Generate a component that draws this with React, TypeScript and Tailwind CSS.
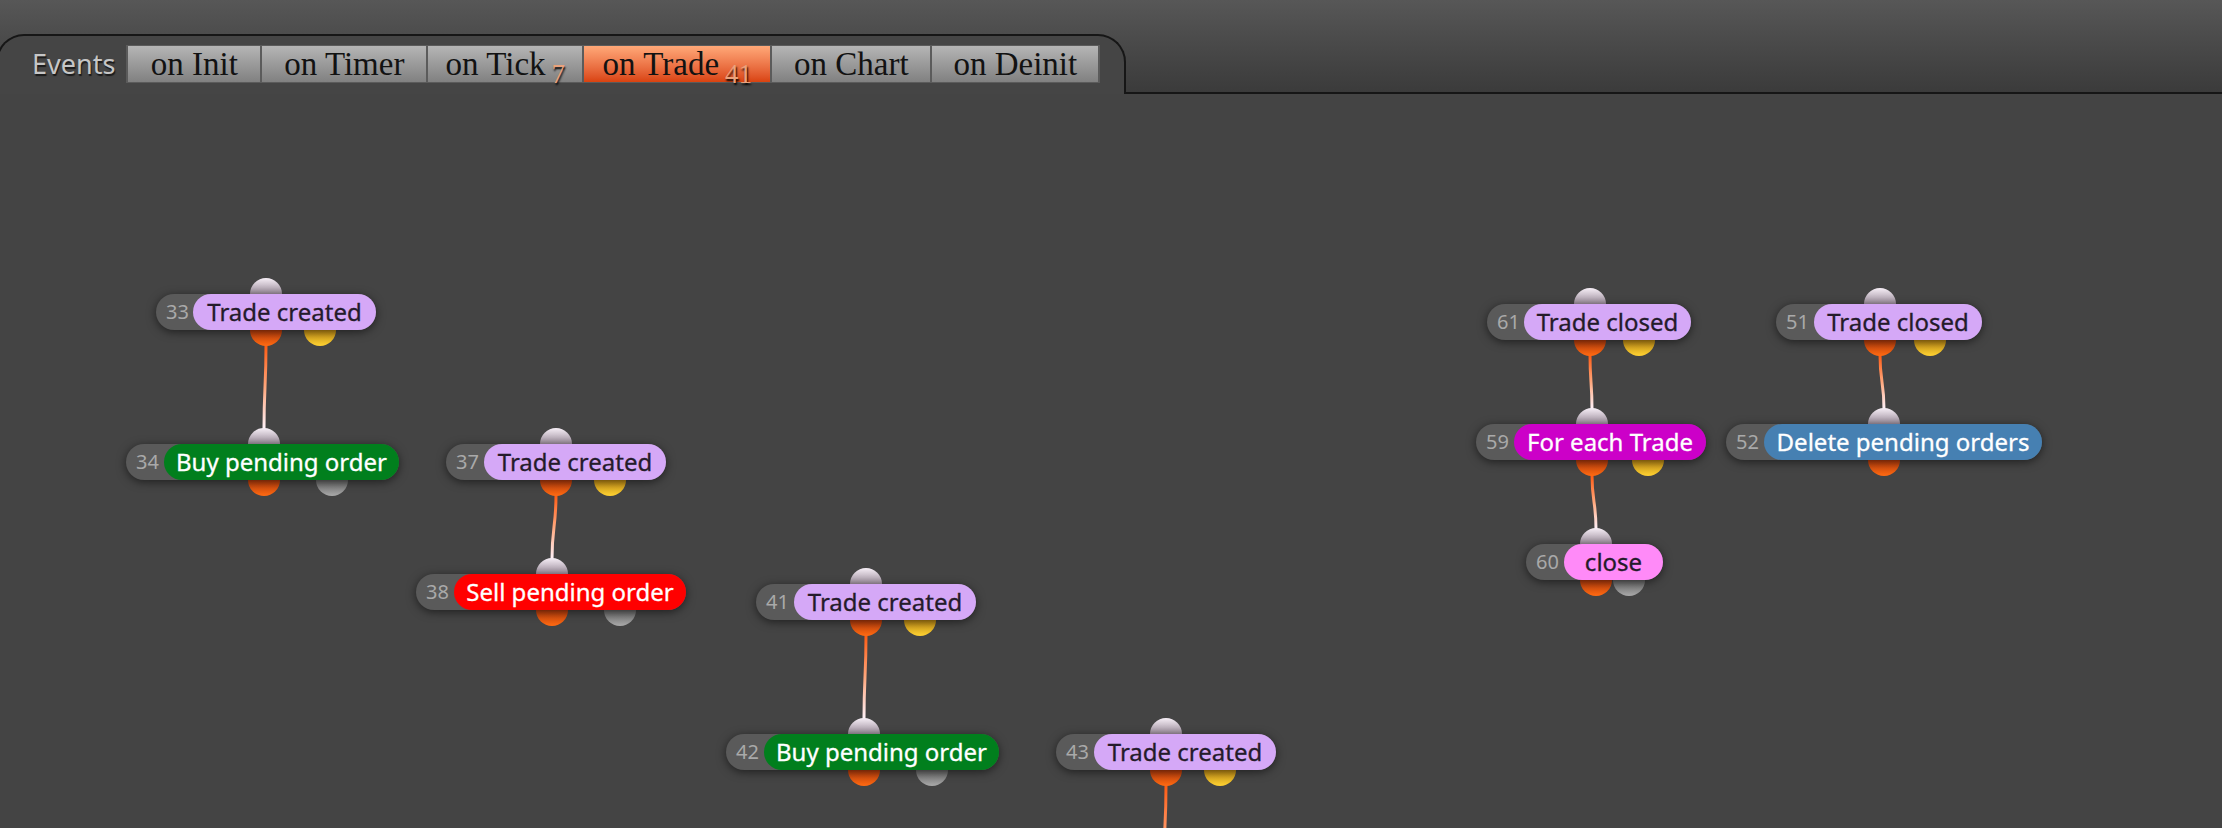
import React from "react";

type Kind = "trade" | "buy" | "sell" | "loop" | "delete" | "close";
type Aux = "yellow" | "gray" | null;

interface NodeData {
  id: number;
  label: string;
  kind: Kind;
  x: number; // left of the grey number pill
  lx: number; // left of the coloured label
  rx: number; // right of the coloured label
  y: number; // top of the pill (page coords)
  inX: number;
  outX: number;
  aux: number | null;
  auxKind: Aux;
}

const CANVAS_TOP = 94;

const nodes: NodeData[] = [
  { id: 33, label: "Trade created", kind: "trade", x: 156, lx: 193, rx: 376, y: 294, inX: 266, outX: 266, aux: 320, auxKind: "yellow" },
  { id: 34, label: "Buy pending order", kind: "buy", x: 126, lx: 164, rx: 399, y: 444, inX: 264, outX: 264, aux: 332, auxKind: "gray" },
  { id: 37, label: "Trade created", kind: "trade", x: 446, lx: 484, rx: 666, y: 444, inX: 556, outX: 556, aux: 610, auxKind: "yellow" },
  { id: 38, label: "Sell pending order", kind: "sell", x: 416, lx: 454, rx: 686, y: 574, inX: 552, outX: 552, aux: 620, auxKind: "gray" },
  { id: 41, label: "Trade created", kind: "trade", x: 756, lx: 794, rx: 976, y: 584, inX: 866, outX: 866, aux: 920, auxKind: "yellow" },
  { id: 42, label: "Buy pending order", kind: "buy", x: 726, lx: 764, rx: 999, y: 734, inX: 864, outX: 864, aux: 932, auxKind: "gray" },
  { id: 43, label: "Trade created", kind: "trade", x: 1056, lx: 1094, rx: 1276, y: 734, inX: 1166, outX: 1166, aux: 1220, auxKind: "yellow" },
  { id: 61, label: "Trade closed", kind: "trade", x: 1487, lx: 1524, rx: 1691, y: 304, inX: 1590, outX: 1590, aux: 1639, auxKind: "yellow" },
  { id: 51, label: "Trade closed", kind: "trade", x: 1776, lx: 1814, rx: 1982, y: 304, inX: 1880, outX: 1880, aux: 1930, auxKind: "yellow" },
  { id: 59, label: "For each Trade", kind: "loop", x: 1476, lx: 1514, rx: 1706, y: 424, inX: 1592, outX: 1592, aux: 1648, auxKind: "yellow" },
  { id: 52, label: "Delete pending orders", kind: "delete", x: 1726, lx: 1764, rx: 2042, y: 424, inX: 1884, outX: 1884, aux: null, auxKind: null },
  { id: 60, label: "close", kind: "close", x: 1526, lx: 1564, rx: 1663, y: 544, inX: 1596, outX: 1596, aux: 1629, auxKind: "gray" },
];

const links: [number, number][] = [
  [33, 34],
  [37, 38],
  [41, 42],
  [61, 59],
  [51, 52],
  [59, 60],
];

const labelStyles: Record<Kind, string> = {
  trade: "bg-[#d5a8f7] text-[#241b2a]",
  buy: "bg-[#017f1d] text-white",
  sell: "bg-[#ff0000] text-white",
  loop: "bg-[#cc00c8] text-white",
  delete: "bg-[#4680b2] text-white",
  close: "bg-[#ff8af8] text-[#241b2a]",
};

const tabs = [
  { name: "on Init", w: "w-[132px]" },
  { name: "on Timer", w: "w-[164px]" },
  { name: "on Tick", w: "w-[154px]", badge: "7" },
  { name: "on Trade", w: "w-[186px]", badge: "41", active: true },
  { name: "on Chart", w: "w-[158px]" },
  { name: "on Deinit", w: "w-[166px]" },
];

function Port({ left, top, kind }: { left: number; top: number; kind: "in" | "out" | "yellow" | "gray" }) {
  const look = {
    in: "bg-linear-to-b from-[#f7eff7] via-[#9a8c9a] via-50% to-[#9a8c9a]",
    out: "bg-linear-to-b from-[#b83c0c] from-50% to-[#ff6a12]",
    yellow: "bg-linear-to-b from-[#c08c14] from-50% to-[#ffd232]",
    gray: "bg-linear-to-b from-[#666666] from-50% to-[#a9a9a9]",
  }[kind];
  return (
    <div
      className={`absolute w-[32px] h-[32px] rounded-full ${look}`}
      style={{ left, top }}
    />
  );
}

function GraphNode({ n }: { n: NodeData }) {
  return (
    <div
      className="absolute h-[36px]"
      style={{ left: n.x, top: n.y - CANVAS_TOP, width: n.rx - n.x }}
    >
      <Port left={n.inX - n.x - 16} top={-16} kind="in" />
      <Port left={n.outX - n.x - 16} top={20} kind="out" />
      {n.aux !== null && n.auxKind && (
        <Port left={n.aux - n.x - 16} top={20} kind={n.auxKind} />
      )}
      <div className="relative flex items-center h-[36px] rounded-full bg-[#5a5a5a] shadow-[0_2px_10px_rgba(0,0,0,0.55)]">
        <span
          className="pl-[10px] text-[20px] leading-none text-[#a9a9a9] font-['Noto_Sans',sans-serif]"
          style={{ width: n.lx - n.x }}
        >
          {n.id}
        </span>
        <span
          className={`flex items-center justify-center h-full rounded-full text-[24px] leading-none font-['Noto_Sans',sans-serif] [-webkit-text-stroke:0.3px_currentColor] ${labelStyles[n.kind]}`}
          style={{ width: n.rx - n.lx }}
        >
          {n.label}
        </span>
      </div>
    </div>
  );
}

function Edges() {
  const byId = Object.fromEntries(nodes.map((n) => [n.id, n]));
  const segs = links.map(([a, b]) => {
    const s = byId[a];
    const t = byId[b];
    return {
      key: `${a}-${b}`,
      x1: s.outX,
      y1: s.y + 36 + 15 - CANVAS_TOP,
      x2: t.inX,
      y2: t.y - 15 - CANVAS_TOP,
    };
  });
  // the link leaving node 43 runs off the bottom of the view
  segs.push({ key: "43-out", x1: 1166, y1: 785 - CANVAS_TOP, x2: 1162, y2: 900 - CANVAS_TOP });

  return (
    <svg className="absolute inset-0" width="2222" height="734">
      <defs>
        {segs.map((s) => (
          <linearGradient
            key={s.key}
            id={`g-${s.key}`}
            gradientUnits="userSpaceOnUse"
            x1={s.x1}
            y1={s.y1}
            x2={s.x2}
            y2={s.y2}
          >
            <stop offset="0" stopColor="#ff5a12" />
            <stop offset="0.5" stopColor="#ffa77c" />
            <stop offset="1" stopColor="#fff2fa" />
          </linearGradient>
        ))}
      </defs>
      {segs.map((s) => (
        <path
          key={s.key}
          d={`M ${s.x1} ${s.y1} C ${s.x1} ${(s.y1 + s.y2) / 2}, ${s.x2} ${(s.y1 + s.y2) / 2}, ${s.x2} ${s.y2}`}
          stroke={`url(#g-${s.key})`}
          strokeWidth="3"
          fill="none"
        />
      ))}
    </svg>
  );
}

export default function App() {
  return (
    <div className="w-[2222px] h-[828px] overflow-hidden flex flex-col bg-[#444444]">
      <header className="h-[94px] shrink-0 flex items-end border-b-2 border-[#161616] bg-linear-to-b from-[#575757] to-[#3b3b3b]">
        <div className="relative -ml-[4px] -mb-[2px] w-[1130px] h-[60px] border-2 border-b-0 border-[#161616] rounded-t-[28px] bg-[#454545] flex items-start pl-[34px] pt-[9px]">
          <span className="mr-[11px] mt-[1px] text-[27px] leading-[36px] text-[#c6c6c6] font-['Noto_Sans',sans-serif] [text-shadow:1px_2px_1px_#1a1a1a]">
            Events
          </span>
          <div className="flex gap-[2px] px-[2px] py-px bg-[#5b5b5b]">
            {tabs.map((t) => (
              <div
                key={t.name}
                className={`${t.w} h-[36px] flex items-center justify-center whitespace-nowrap text-[33px] leading-[36px] text-[#121212] font-['Liberation_Serif',serif] ${
                  t.active
                    ? "bg-linear-to-b from-[#ffa878] to-[#d9420e]"
                    : "bg-linear-to-b from-[#b5b5b5] to-[#818181]"
                }`}
              >
                <span>{t.name}</span>
                {t.badge && (
                  <span className="relative top-[10px] ml-[6px] text-[27px] leading-none text-[#eaa27c] [text-shadow:1px_2px_2px_#000]">
                    {t.badge}
                  </span>
                )}
              </div>
            ))}
          </div>
        </div>
      </header>
      <main className="relative flex-1">
        <Edges />
        {nodes.map((n) => (
          <GraphNode key={n.id} n={n} />
        ))}
      </main>
    </div>
  );
}
